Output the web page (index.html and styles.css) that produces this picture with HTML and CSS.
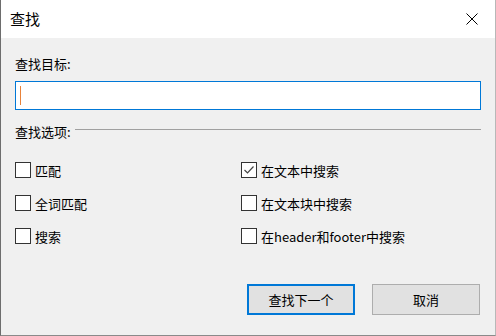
FILE: index.html
```html
<!DOCTYPE html>
<html lang="zh-CN">
<head>
    <meta charset="UTF-8">
    <title>查找</title>
    <link rel="stylesheet" href="styles.css">
</head>
<body>
    <div class="window">
        <div class="titlebar">
            <span class="title">查找</span>
            <svg class="close" width="12" height="12" viewBox="0 0 12 12">
                <path d="M0.5 0.5 L11.5 11.5 M11.5 0.5 L0.5 11.5" stroke="#000" stroke-width="1"/>
            </svg>
        </div>
        <div class="content">
            <div class="label">查找目标:</div>
            <div class="input"><span class="caret"></span></div>

            <div class="group">
                <span>查找选项:</span>
                <div class="rule"></div>
            </div>

            <div class="options">
                <div class="opt"><span class="box"></span>匹配</div>
                <div class="opt"><span class="box checked">
                    <svg width="12" height="12" viewBox="0 0 12 12"><path d="M1.5 6 L4.5 9 L10.5 2.5" fill="none" stroke="#444" stroke-width="1.2"/></svg>
                </span>在文本中搜索</div>
                <div class="opt"><span class="box"></span>全词匹配</div>
                <div class="opt"><span class="box"></span>在文本块中搜索</div>
                <div class="opt"><span class="box"></span>搜索</div>
                <div class="opt"><span class="box"></span>在header和footer中搜索</div>
            </div>

            <div class="buttons">
                <button class="btn primary">查找下一个</button>
                <button class="btn">取消</button>
            </div>
        </div>
    </div>
</body>
</html>
```

FILE: styles.css
```css
body {
    margin: 0;
    padding: 0;
    font-family: "Noto Sans CJK SC", "Noto Sans", sans-serif;
    font-size: 13px;
    color: #000;
}

.window {
    width: 496px;
    height: 336px;
    box-sizing: border-box;
    border-left: 1px solid #6d6d6d;
    border-right: 1px solid #b8b8b8;
    border-bottom: 1px solid #8a8a8a;
    background: #f0f0f0;
    display: flex;
    flex-direction: column;
}

.titlebar {
    height: 38px;
    background: #fff;
    display: flex;
    align-items: center;
    justify-content: space-between;
    padding: 0 17px 0 9px;
}

.title {
    font-size: 15px;
    line-height: 18px;
    margin-top: -1px;
}

.close {
    display: block;
    margin-top: -1px;
}

.content {
    padding: 17px 14px 0 14px;
    display: flex;
    flex-direction: column;
}

.label {
    line-height: 18px;
}

.input {
    margin-top: 8px;
    height: 29px;
    box-sizing: border-box;
    border: 1px solid #0078d7;
    background: #fff;
    padding: 4px 0 0 4px;
}

.caret {
    display: block;
    width: 1px;
    height: 19px;
    background: #e8823a;
}

.group {
    margin-top: 13px;
    display: flex;
    align-items: center;
    line-height: 18px;
}

.rule {
    flex: 1;
    height: 1px;
    background: #a0a0a0;
    margin: -6px 0 0 4px;
}

.options {
    margin-top: 20px;
    display: grid;
    grid-template-columns: 226px 1fr;
    row-gap: 15px;
}

.opt {
    display: flex;
    align-items: center;
    height: 18px;
    gap: 4px;
}

.box {
    width: 16px;
    height: 16px;
    box-sizing: border-box;
    border: 1px solid #333;
    background: #fff;
    display: flex;
    align-items: center;
    justify-content: center;
}

.box svg {
    display: block;
}

.buttons {
    margin-top: 39px;
    display: flex;
    justify-content: flex-end;
    gap: 17px;
    padding-right: 1px;
}

.btn {
    width: 108px;
    height: 31px;
    box-sizing: border-box;
    border: 1px solid #adadad;
    background: #e1e1e1;
    font-family: inherit;
    font-size: 13px;
    padding: 0;
}

.btn.primary {
    border: 2px solid #0078d7;
}
```
